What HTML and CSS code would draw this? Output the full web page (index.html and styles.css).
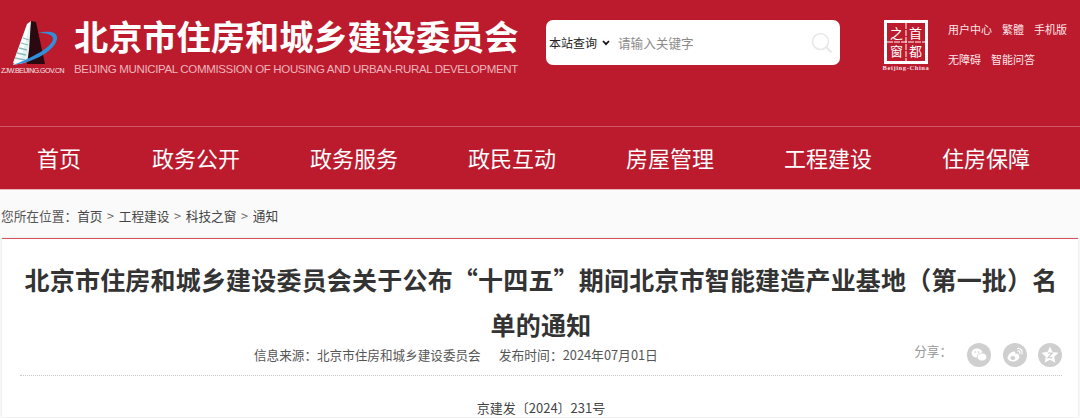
FILE: index.html
```html
<!DOCTYPE html>
<html lang="zh-CN">
<head>
<meta charset="utf-8">
<title>北京市住房和城乡建设委员会</title>
<link rel="stylesheet" href="styles.css">
</head>
<body>
<header class="header">
  <div class="logo">
    <svg class="logo-mark" viewBox="0 0 66 46" width="66" height="46" aria-hidden="true">
      <polygon points="31,1 13,45 24,43 30,40" fill="#e4f1f1"/>
      <polygon points="31,1 36,2 45,44 27,44 29,30" fill="#2a0a10"/>
      <polygon points="31,1 27,4 13,43 20,43" fill="#f7ffff"/>
      <path d="M23 18 L29 20 M21 23 L28 25 M19 28 L27 30 M17 33 L26 35 M15 38 L25 40" stroke="#8fb9bd" stroke-width="1.300"/>
      <path d="M38 13 C50 10 58 12 57 19 C55 30 36 42 13 45 C32 38 52 27 53 19 C53 14 46 13 38 13 Z" fill="#2f8fd8"/>
    </svg>
    <span class="logo-url">ZJW.BEIJING.GOV.CN</span>
  </div>
  <div class="brand">
    <div class="brand-cn">北京市住房和城乡建设委员会</div>
    <div class="brand-en">BEIJING MUNICIPAL COMMISSION OF HOUSING AND URBAN-RURAL DEVELOPMENT</div>
  </div>
  <form class="search">
    <span class="scope">本站查询
      <svg class="chev" viewBox="0 0 8 6" width="8" height="6" aria-hidden="true"><path d="M1 1 L4 4.2 L7 1" fill="none" stroke="#111" stroke-width="1.700"/></svg>
    </span>
    <span class="placeholder">请输入关键字</span>
    <svg class="search-icon" viewBox="0 0 22 22" width="22" height="22" aria-hidden="true">
      <circle cx="9.500" cy="9.500" r="8" fill="none" stroke="#e8e8e8" stroke-width="1.600"/>
      <path d="M15.500 15.500 L20.500 20.500" stroke="#e8e8e8" stroke-width="2.200"/>
    </svg>
  </form>
  <div class="seal">
    <svg viewBox="0 0 44 44" width="44" height="44" aria-hidden="true">
      <rect x="1.500" y="1.500" width="41" height="41" fill="none" stroke="#fff" stroke-width="3"/>
      <path d="M22 3 V41 M3 22 H41" stroke="#fff" stroke-width="1" stroke-dasharray="6 1"/>
      <text x="12.500" y="17.500" class="seal-char">之</text>
      <text x="31.500" y="17.500" class="seal-char">首</text>
      <text x="12.500" y="36" class="seal-char">窗</text>
      <text x="31.500" y="36" class="seal-char">都</text>
    </svg>
    <span class="seal-en">Beijing-China</span>
  </div>
  <div class="tools">
    <div class="tool-row"><a>用户中心</a><a>繁體</a><a>手机版</a></div>
    <div class="tool-row"><a>无障碍</a><a>智能问答</a></div>
  </div>
</header>
<nav class="nav">
  <a class="nav-first">首页</a><a>政务公开</a><a>政务服务</a><a>政民互动</a><a>房屋管理</a><a>工程建设</a><a>住房保障</a>
</nav>
<div class="crumbs">您所在位置：<a>首页</a><i>&gt;</i><a>工程建设</a><i>&gt;</i><a>科技之窗</a><i>&gt;</i><a>通知</a></div>
<main class="article">
  <h1>北京市住房和城乡建设委员会关于公布“十四五”期间北京市智能建造产业基地（第一批）名单的通知</h1>
  <div class="meta">
    <div class="meta-info"><span>信息来源：北京市住房和城乡建设委员会</span><span class="meta-date">发布时间：2024年07月01日</span></div>
    <div class="share">
      <span class="share-label">分享：</span>
      <svg class="share-icon" viewBox="0 0 24 24" width="24" height="24" aria-hidden="true">
        <circle cx="12" cy="12" r="12" fill="#cfcfcf"/>
        <ellipse cx="10" cy="10" rx="5.500" ry="4.500" fill="#fff"/>
        <ellipse cx="15" cy="14" rx="4.800" ry="4" fill="#fff" stroke="#cfcfcf" stroke-width="0.800"/>
        <circle cx="8.200" cy="9" r="0.800" fill="#cfcfcf"/><circle cx="11.500" cy="9" r="0.800" fill="#cfcfcf"/>
      </svg>
      <svg class="share-icon" viewBox="0 0 24 24" width="24" height="24" aria-hidden="true">
        <circle cx="12" cy="12" r="12" fill="#cfcfcf"/>
        <path d="M10 18.500 C6.500 18.500 4.500 16.800 4.500 14.800 C4.500 12 8.500 8.500 11 8.500 C12.500 8.500 12.500 10 12.200 11 C14 10.300 16 10.500 16 12.300 C17.500 15 14 18.500 10 18.500 Z" fill="#fff"/>
        <ellipse cx="9.800" cy="15" rx="2.400" ry="2" fill="#cfcfcf"/>
        <path d="M14.500 5.500 C17.500 5 20 7.500 19 11 M14.800 8 C16.200 7.800 17.200 8.800 16.800 10.300" fill="none" stroke="#fff" stroke-width="1.200" stroke-linecap="round"/>
      </svg>
      <svg class="share-icon" viewBox="0 0 24 24" width="24" height="24" aria-hidden="true">
        <circle cx="12" cy="12" r="12" fill="#cfcfcf"/>
        <polygon points="12,3.500 14.600,9 20.500,9.700 16.200,13.800 17.300,19.700 12,16.800 6.700,19.700 7.800,13.800 3.500,9.700 9.400,9" fill="#fff"/>
        <path d="M9.800 10.200 H14.200 L10 14.600 H14.400" fill="none" stroke="#cfcfcf" stroke-width="1.300"/>
      </svg>
    </div>
  </div>
  <p class="docno">京建发〔2024〕231号</p>
</main>
</body>
</html>
```

FILE: styles.css
```css
* { box-sizing: border-box; }
html, body { margin: 0; padding: 0; height: 418px; overflow: hidden; }
body {
  font-family: "Noto Sans CJK SC", "Liberation Sans", sans-serif;
  background: #fafafa;
  color: #333;
}
a { color: inherit; text-decoration: none; }
i { font-style: normal; }

.header {
  height: 127px;
  background: #bc1b2e;
  border-bottom: 1px solid #d3566a;
  display: flex;
  align-items: flex-start;
  color: #fff;
}
.logo { width: 74px; padding-top: 20px; display: flex; flex-direction: column; }
.logo-mark { display: block; }
.logo-url {
  font-family: "Liberation Sans", sans-serif;
  font-size: 7px;
  line-height: 9px;
  letter-spacing: -0.500px;
  padding-left: 1px;
  white-space: nowrap;
  color: #f3e6e8;
}
.brand { width: 472px; padding-top: 13px; }
.brand-cn { font-size: 34.200px; line-height: 44px; font-weight: 700; white-space: nowrap; }
.brand-en {
  font-family: "Liberation Sans", sans-serif;
  font-size: 11.500px;
  line-height: 14px;
  margin-top: 5px;
  letter-spacing: -0.340px;
  white-space: nowrap;
  color: #eeb4bc;
}

.search {
  width: 294px;
  height: 45px;
  margin-top: 20px;
  background: #fff;
  border-radius: 7px;
  display: flex;
  align-items: center;
  padding-left: 3px;
  padding-right: 7px;
}
.scope {
  font-size: 12px;
  color: #222;
  display: flex;
  align-items: center;
  gap: 5px;
  white-space: nowrap;
}
.placeholder { margin-left: 8px; font-size: 12.600px; color: #8a8a8a; white-space: nowrap; }
.search-icon { margin-left: auto; }

.seal { width: 44px; margin-top: 20px; margin-left: 44px; display: flex; flex-direction: column; align-items: center; }
.seal svg { display: block; }
.seal-char { fill: #fff; font-size: 13px; text-anchor: middle; font-family: "Noto Sans CJK SC", sans-serif; }
.seal-en {
  font-family: "Liberation Serif", serif;
  font-size: 6.500px;
  font-weight: 700;
  line-height: 8px;
  letter-spacing: 0.600px;
  color: #f3dfe2;
  white-space: nowrap;
}
.tools { margin-left: 20px; padding-top: 20px; font-size: 11px; color: #fbe6e9; }
.tool-row { display: flex; gap: 10px; height: 30px; line-height: 18px; white-space: nowrap; }

.nav {
  height: 63px;
  background: #bc1b2e;
  border-bottom: 1px solid #e6b7bd;
  display: flex;
  align-items: center;
  gap: 70px;
  padding-left: 37px;
  padding-bottom: 3px;
  font-size: 22px;
  color: #fff;
  white-space: nowrap;
}
.nav-first { margin-right: 1px; }

.crumbs {
  height: 48px;
  line-height: 51px;
  font-size: 12.700px;
  color: #555;
  white-space: nowrap;
  padding-left: 1px;
}
.crumbs a { color: #444; }
.crumbs i { margin: 0 4.600px; color: #666; }

.article {
  height: 179px;
  margin: 0 2px;
  background: #fff;
  border-top: 1px solid #d9505f;
  padding: 18px 16px 0 18px;
  box-shadow: 0 0 2px #ddd;
}
h1 {
  margin: 0;
  font-size: 25px;
  line-height: 45px;
  letter-spacing: 0.190px;
  font-weight: 700;
  color: #333;
  text-align: center;
}
.meta {
  height: 36px;
  display: flex;
  justify-content: space-between;
  border-bottom: 1px dotted #c8c8c8;
  margin-top: -7px;
}
.meta-info { padding-left: 234px; display: flex; gap: 18px; font-size: 12.600px; line-height: 30px; color: #555; white-space: nowrap; }
.meta-date { font-size: 12.800px; }
.share { display: flex; align-items: flex-start; padding-top: 3px; }
.share-label { font-size: 12.600px; line-height: 16px; color: #999; margin-right: 15px; white-space: nowrap; }
.share-icon { margin-right: 11.500px; display: block; }
.share-icon:last-child { margin-right: 0; }
.docno { margin: 22px 0 0; text-align: center; font-size: 13px; line-height: 20px; color: #444; }
```
